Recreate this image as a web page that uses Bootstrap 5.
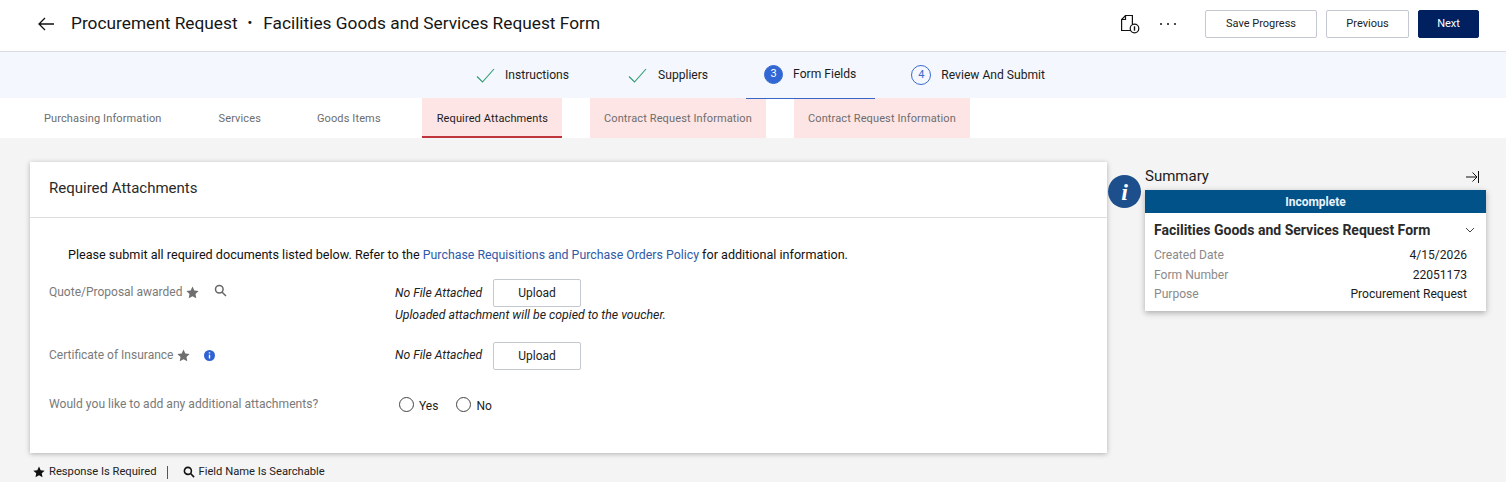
<!DOCTYPE html>
<html lang="en">
<head>
  <meta charset="UTF-8" />
  <title>Procurement Request</title>
  <link href="https://cdn.jsdelivr.net/npm/bootstrap@5.3.3/dist/css/bootstrap.min.css" rel="stylesheet">
  <style>
    html, body { height: 482px; overflow: hidden; }
    body { font-family: Roboto, "Liberation Sans", sans-serif; background: #f4f4f4; color: #1c1c1c; font-size: 12px; }
    a { text-decoration: none; }

    .top-bar { height: 52px; background: #fff; border-bottom: 1px solid #d9dde3; padding: 0 27px 3px 38px; }
    .top-title { font-size: 17.3px; margin-left: 17px; color: #161616; }
    .title-dot { margin: 0 11px 0 10px; font-weight: 700; font-size: 13px; position: relative; top: -2px; }
    .bar-btn { height: 28px; font-size: 11px; padding: 1px 0 0; border: 1px solid #c4c8cf; border-radius: 2px; background: #fff; color: #222; }
    .bar-btn-save { width: 112px; }
    .bar-btn-prev { width: 83px; }
    .bar-btn-next { width: 61px; background: #002060; border-color: #002060; color: #fff; }
    .bar-btns { gap: 9px; }
    .more-dots { margin: 0 28px 0 19px; }

    .step-band { height: 46px; background: #f4f7fd; padding-left: 15px; }
    .step-item { height: 46px; font-size: 12.1px; color: #1c1c1c; padding: 0 18px; }
    .step-gap-a { margin-right: 23px; }
    .step-gap-b { margin-right: 20px; }
    .step-gap-c { margin-right: 18px; }
    .step-item-on { height: 47px; border-bottom: 1px solid #3a66c5; padding-right: 19px; padding-bottom: 2px; position: relative; z-index: 1; }
    .step-check { margin-right: 10px; }
    .step-check-wide { margin-right: 11px; }
    .step-num { width: 20px; height: 20px; border-radius: 50%; border: 1px solid #3a6bd0; color: #3a6bd0; font-size: 11px; margin-right: 10px; }
    .step-item-on .step-num { background: #3167d4; color: #fff; width: 19px; height: 19px; }

    .tab-band { height: 40px; background: #fff; padding-left: 30px; gap: 28px; }
    .sub-tab { height: 40px; padding: 2px 14px 0; font-size: 11px; color: #6d6d6d; letter-spacing: .12px; }
    .sub-tab-lead { margin-right: 1px; }
    .sub-tab-tail { margin-right: -1px; }
    .sub-tab-warn { background: #fde5e5; }
    .sub-tab-on { color: #1c1c1c; border-bottom: 2px solid #c0343c; padding-top: 4px; padding-left: 15px; padding-right: 14px; }

    .page-body { padding: 24px 20px 0 30px; }
    .form-panel { width: 1077px; height: 291px; background: #fff; box-shadow: 0 1px 5px rgba(0,0,0,.28); }
    .panel-head { height: 56px; padding: 0 0 2px 19px; font-size: 15px; border-bottom: 1px solid #dedede; color: #2a2a2a; }
    .panel-intro { padding: 29px 0 0 38px; font-size: 12.6px; line-height: 16px; color: #111; }
    .panel-intro a { color: #2f5aa8; font-size: 12.35px; }
    .field-row { padding-left: 19px; }
    .field-name { width: 346px; color: #7a7a7a; font-size: 12px; flex: none; }
    .field-none { font-style: italic; font-size: 12.2px; width: 98px; flex: none; color: #222; }
    .field-note { font-style: italic; font-size: 12.3px; color: #222; line-height: 16px; }
    .upload-btn { width: 88px; height: 28px; padding: 0; font-size: 12px; background: #fff; border: 1px solid #c4c8cf; border-radius: 2px; color: #222; }
    .row-quote { margin-top: 16px; height: 63px; }
    .row-cert { height: 53px; }
    .row-more { height: 30px; }
    .row-more .field-name { font-size: 12.1px; }
    .radio-wrap { padding-top: 2px; }
    .radio-ring { width: 15px; height: 15px; border: 1px solid #444; border-radius: 50%; background: #fff; margin-right: 5px; }
    .radio-yes { margin-right: 18px; }
    .star-mark { margin: 3px 0 0 4px; }
    .name-search { margin-left: 15px; margin-top: 1px; }
    .name-info { margin: 4px 0 0 14px; }

    .legend-bar { margin-top: 12px; font-size: 11.2px; padding-left: 3px; color: #222; line-height: 14px; }
    .legend-sep { width: 1px; height: 13px; background: #555; margin: 0 15px 0 10px; }

    .info-disc { width: 33px; height: 33px; border-radius: 50%; background: #1d4f8c; color: #fff; font-family: "Liberation Serif", serif; font-style: italic; font-weight: 700; font-size: 24px; margin: 13px 4px 0 1px; flex: none; }
    .summary-box { width: 341px; flex: none; }
    .summary-top { height: 28px; font-size: 15px; padding: 1px 7px 0 0; color: #1c1c1c; }
    .summary-panel { background: #fff; box-shadow: 0 2px 6px rgba(0,0,0,.3); height: 121px; }
    .summary-status { height: 23px; background: #005288; color: #e9f3fa; font-weight: 700; font-size: 12px; }
    .summary-name { font-size: 14px; font-weight: 700; padding: 9px 11px 0 9px; color: #2a2a2a; line-height: 16px; }
    .summary-line { padding: 0 19px 0 9px; font-size: 12.1px; line-height: 19.5px; color: #1c1c1c; }
    .summary-line span:first-child { color: #8a8a8a; }
    .summary-lines { margin-top: 8px; }
  </style>
</head>
<body>
  <div class="top-bar d-flex align-items-center">
    <svg width="16" height="14" viewBox="0 0 16 14" fill="none" stroke="#111" stroke-width="1.3"><path d="M16 7H1M7 1 1 7l6 6"/></svg>
    <div class="top-title">Procurement Request<span class="title-dot">•</span>Facilities Goods and Services Request Form</div>
    <div class="ms-auto d-flex align-items-center">
      <svg width="20" height="20" viewBox="0 0 20 20" fill="none" stroke="#111" stroke-width="1.2"><path d="M11 16.500H1.600V5.500L5.500 1.500H12.400V10"/><path d="M5.500 1.500V5.500H1.600"/><circle cx="14.500" cy="14.500" r="4.300" fill="#fff"/><path d="M14.500 12.300v4.400" stroke-width="1.400"/></svg>
      <svg class="more-dots" width="18" height="4" viewBox="0 0 18 4" fill="#222"><circle cx="2" cy="2" r="1.100"/><circle cx="9" cy="2" r="1.100"/><circle cx="16" cy="2" r="1.100"/></svg>
      <div class="bar-btns d-flex">
        <button class="bar-btn bar-btn-save" type="button">Save Progress</button>
        <button class="bar-btn bar-btn-prev" type="button">Previous</button>
        <button class="bar-btn bar-btn-next" type="button">Next</button>
      </div>
    </div>
  </div>

  <div class="step-band d-flex justify-content-center">
    <div class="step-item step-gap-a d-flex align-items-center">
      <svg class="step-check" width="19" height="15" viewBox="0 0 19 15" fill="none" stroke="#2c9a6f" stroke-width="1.100"><path d="M1 8.500 6.500 14 18 1"/></svg>
      <span>Instructions</span>
    </div>
    <div class="step-item step-gap-b d-flex align-items-center">
      <svg class="step-check-wide" width="19" height="15" viewBox="0 0 19 15" fill="none" stroke="#2c9a6f" stroke-width="1.100"><path d="M1 8.500 6.500 14 18 1"/></svg>
      <span>Suppliers</span>
    </div>
    <div class="step-item step-item-on step-gap-c d-flex align-items-center">
      <span class="step-num d-flex align-items-center justify-content-center">3</span>
      <span>Form Fields</span>
    </div>
    <div class="step-item d-flex align-items-center">
      <span class="step-num d-flex align-items-center justify-content-center">4</span>
      <span>Review And Submit</span>
    </div>
  </div>

  <div class="tab-band d-flex">
    <div class="sub-tab sub-tab-lead d-flex align-items-center">Purchasing Information</div>
    <div class="sub-tab d-flex align-items-center">Services</div>
    <div class="sub-tab sub-tab-tail d-flex align-items-center">Goods Items</div>
    <div class="sub-tab sub-tab-warn sub-tab-on d-flex align-items-center">Required Attachments</div>
    <div class="sub-tab sub-tab-warn d-flex align-items-center">Contract Request Information</div>
    <div class="sub-tab sub-tab-warn d-flex align-items-center">Contract Request Information</div>
  </div>

  <div class="page-body d-flex">
    <div>
      <div class="form-panel">
        <div class="panel-head d-flex align-items-center">Required Attachments</div>
        <div class="panel-intro">Please submit all required documents listed below. Refer to the <a href="#">Purchase Requisitions and Purchase Orders Policy</a> for additional information.</div>
        <div class="field-row row-quote d-flex">
          <div class="field-name d-flex align-items-start pt-1">
            <span>Quote/Proposal awarded</span>
            <svg class="star-mark" width="13" height="13" viewBox="0 0 24 24" fill="#6e6e6e"><path d="m12 1 3.400 7.300 7.900 1-5.800 5.400 1.500 7.900L12 18.700l-7 3.900 1.500-7.900L.7 9.300l7.900-1z"/></svg>
            <svg class="name-search" width="13" height="13" viewBox="0 0 13 13" fill="none" stroke="#666" stroke-width="1.500"><circle cx="5.300" cy="5.300" r="3.800"/><path d="m8.200 8.200 3.800 3.800"/></svg>
          </div>
          <div>
            <div class="d-flex align-items-center">
              <span class="field-none">No File Attached</span>
              <button class="upload-btn" type="button">Upload</button>
            </div>
            <div class="field-note">Uploaded attachment will be copied to the voucher.</div>
          </div>
        </div>
        <div class="field-row row-cert d-flex">
          <div class="field-name d-flex align-items-start pt-1">
            <span>Certificate of Insurance</span>
            <svg class="star-mark" width="13" height="13" viewBox="0 0 24 24" fill="#6e6e6e"><path d="m12 1 3.400 7.300 7.900 1-5.800 5.400 1.500 7.900L12 18.700l-7 3.900 1.500-7.900L.7 9.300l7.900-1z"/></svg>
            <svg class="name-info" width="11" height="11" viewBox="0 0 11 11"><circle cx="5.500" cy="5.500" r="5.500" fill="#2f62d3"/><path d="M5.500 2.200v1.200M5.500 4.800v3.800" stroke="#fff" stroke-width="1.400"/></svg>
          </div>
          <div class="d-flex align-items-start">
            <span class="field-none pt-1">No File Attached</span>
            <button class="upload-btn" type="button">Upload</button>
          </div>
        </div>
        <div class="field-row row-more d-flex">
          <div class="field-name">Would you like to add any additional attachments?</div>
          <div class="radio-wrap d-flex align-items-start ms-1">
            <span class="radio-ring"></span><span class="radio-yes">Yes</span>
            <span class="radio-ring"></span><span>No</span>
          </div>
        </div>
      </div>
      <div class="legend-bar d-flex align-items-center">
        <svg class="me-1" width="12" height="12" viewBox="0 0 24 24" fill="#111"><path d="m12 1 3.400 7.300 7.900 1-5.800 5.400 1.500 7.900L12 18.700l-7 3.900 1.500-7.900L.7 9.300l7.900-1z"/></svg>
        <span>Response Is Required</span>
        <span class="legend-sep"></span>
        <svg class="me-1" width="12" height="12" viewBox="0 0 13 13" fill="none" stroke="#111" stroke-width="1.700"><circle cx="5.300" cy="5.300" r="3.800"/><path d="m8.200 8.200 3.800 3.800"/></svg>
        <span>Field Name Is Searchable</span>
      </div>
    </div>

    <div class="info-disc d-flex align-items-center justify-content-center">i</div>

    <div class="summary-box">
      <div class="summary-top d-flex align-items-center justify-content-between">
        <span>Summary</span>
        <svg width="13" height="12" viewBox="0 0 13 12" fill="none" stroke="#111" stroke-width="1"><path d="M0 6h10.500M6.500 1.500 11 6l-4.500 4.500M12.500 0v12"/></svg>
      </div>
      <div class="summary-panel">
        <div class="summary-status d-flex align-items-center justify-content-center">Incomplete</div>
        <div class="summary-name d-flex align-items-center justify-content-between">
          <span>Facilities Goods and Services Request Form</span>
          <svg width="10" height="6" viewBox="0 0 10 6" fill="none" stroke="#444" stroke-width="1"><path d="m1 1 4 4 4-4"/></svg>
        </div>
        <div class="summary-lines">
          <div class="summary-line d-flex justify-content-between"><span>Created Date</span><span>4/15/2026</span></div>
          <div class="summary-line d-flex justify-content-between"><span>Form Number</span><span>22051173</span></div>
          <div class="summary-line d-flex justify-content-between"><span>Purpose</span><span>Procurement Request</span></div>
        </div>
      </div>
    </div>
  </div>

  <script src="https://cdn.jsdelivr.net/npm/bootstrap@5.3.3/dist/js/bootstrap.bundle.min.js"></script>
</body>
</html>
